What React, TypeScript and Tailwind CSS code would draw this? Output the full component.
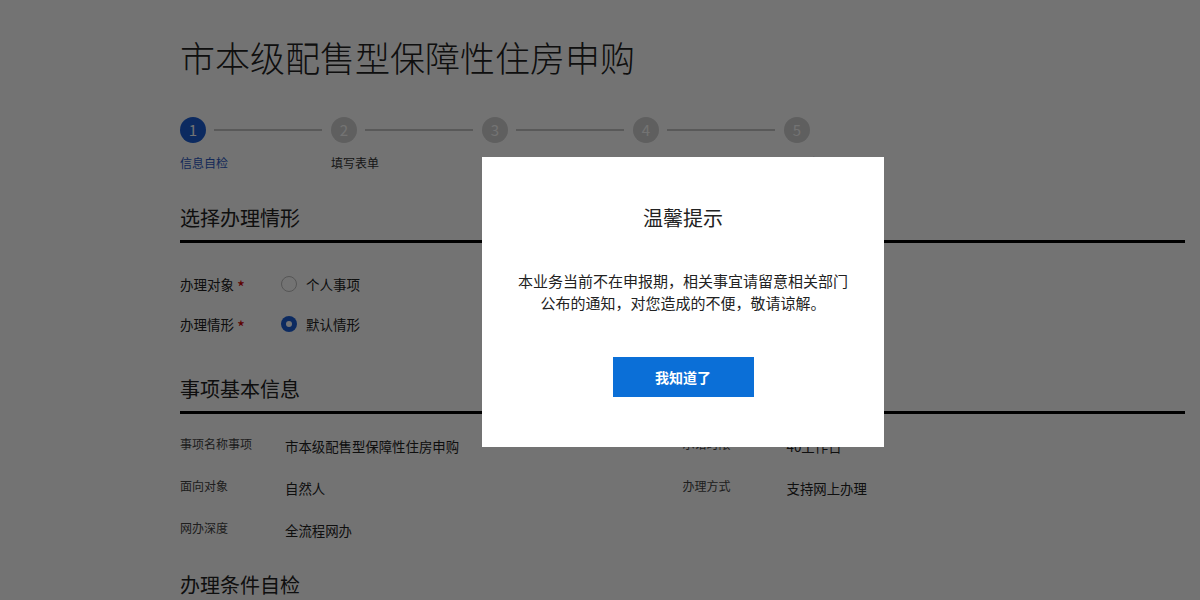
import React from 'react';

const FONT = { fontFamily: '"Microsoft YaHei", "Noto Sans CJK SC", "Noto Sans", sans-serif' };

const STEPS = ['信息自检', '填写表单', '上传材料', '确认提交', '办理完成'];

const INFO_ROWS = [
  ['事项名称事项', '市本级配售型保障性住房申购', '承诺时限', '40工作日'],
  ['面向对象', '自然人', '办理方式', '支持网上办理'],
  ['网办深度', '全流程网办', '', ''],
];

function SectionTitle({ children, line = true }: { children: React.ReactNode; line?: boolean }) {
  return (
    <div className={line ? 'pb-[8px] border-b-[3px] border-black' : ''}>
      <h2 className="text-[20px] leading-[28px] text-[#222]">{children}</h2>
    </div>
  );
}

function Radio({ checked }: { checked?: boolean }) {
  return checked ? (
    <span className="w-[16px] h-[16px] rounded-full bg-[#1b5ed6] flex items-center justify-center">
      <span className="w-[6px] h-[6px] rounded-full bg-white" />
    </span>
  ) : (
    <span className="w-[16px] h-[16px] rounded-full border border-[#bdbdbd] bg-white" />
  );
}

export default function App() {
  return (
    <div className="relative w-[1200px] h-[600px] overflow-hidden bg-white" style={FONT}>
      <div className="ml-[180px] w-[1005px] pt-[35px]">
        <h1 className="text-[35px] leading-[44px] font-light text-[#222]">市本级配售型保障性住房申购</h1>

        {/* steps */}
        <div className="mt-[38px] flex">
          {STEPS.map((label, i) => (
            <div key={label} className="w-[151px] shrink-0">
              <div className="flex items-center">
                <span
                  className={
                    'w-[26px] h-[26px] rounded-full flex items-center justify-center text-[15px] text-white shrink-0 ' +
                    (i === 0 ? 'bg-[#1b5ed6]' : 'bg-[#d2d2d2]')
                  }
                >
                  {i + 1}
                </span>
                {i < STEPS.length - 1 && <span className="ml-[8px] w-[108px] h-[2px] bg-[#c6c6c6]" />}
              </div>
              <div
                className={
                  'mt-[11px] text-[12px] leading-[17px] ' + (i === 0 ? 'text-[#2d5bc4]' : 'text-[#333]')
                }
              >
                {label}
              </div>
            </div>
          ))}
        </div>

        <div className="mt-[33px]">
          <SectionTitle>选择办理情形</SectionTitle>
        </div>

        <div className="mt-[31px] flex flex-col gap-[20px]">
          {[
            ['办理对象', '个人事项', false],
            ['办理情形', '默认情形', true],
          ].map(([label, value, checked]) => (
            <div key={label as string} className="flex items-center h-[20px] text-[13.5px] leading-[20px] text-[#222]">
              <span className="w-[101px] shrink-0 flex items-center">
                {label as string}
                <span className="text-[#d00000] text-[17px] leading-[20px] ml-[3px] mt-[5px]">*</span>
              </span>
              <Radio checked={checked as boolean} />
              <span className="ml-[9px]">{value as string}</span>
            </div>
          ))}
        </div>

        <div className="mt-[41px]">
          <SectionTitle>事项基本信息</SectionTitle>
        </div>

        <div className="mt-[21px] flex flex-col gap-[22px]">
          {INFO_ROWS.map(([l1, v1, l2, v2]) => (
            <div key={l1} className="grid grid-cols-2 h-[20px]">
              <div className="flex items-start">
                <span className="w-[105px] shrink-0 text-[12px] leading-[17px] text-[#444]">{l1}</span>
                <span className="mt-[1px] text-[13.4px] leading-[20px] text-[#222]">{v1}</span>
              </div>
              <div className="flex items-start">
                <span className="w-[104px] shrink-0 text-[12px] leading-[17px] text-[#444]">{l2}</span>
                <span className="mt-[1px] text-[13.4px] leading-[20px] text-[#222]">{v2}</span>
              </div>
            </div>
          ))}
        </div>

        <div className="mt-[32px]">
          <SectionTitle line={false}>办理条件自检</SectionTitle>
        </div>
      </div>

      {/* modal overlay */}
      <div className="absolute inset-0 bg-black/55" />
      <div className="absolute left-[482px] top-[157px] w-[402px] h-[290px] bg-white px-[30px] pt-[47px] flex flex-col items-center text-center">
        <h3 className="text-[20px] leading-[28px] text-[#222]">温馨提示</h3>
        <p className="mt-[38px] text-[15px] leading-[22px] text-[#222]">
          本业务当前不在申报期，相关事宜请留意相关部门公布的通知，对您造成的不便，敬请谅解。
        </p>
        <button className="mt-[43px] w-[141px] h-[40px] bg-[#0b6fd7] text-white text-[14px] font-bold">
          我知道了
        </button>
      </div>
    </div>
  );
}
